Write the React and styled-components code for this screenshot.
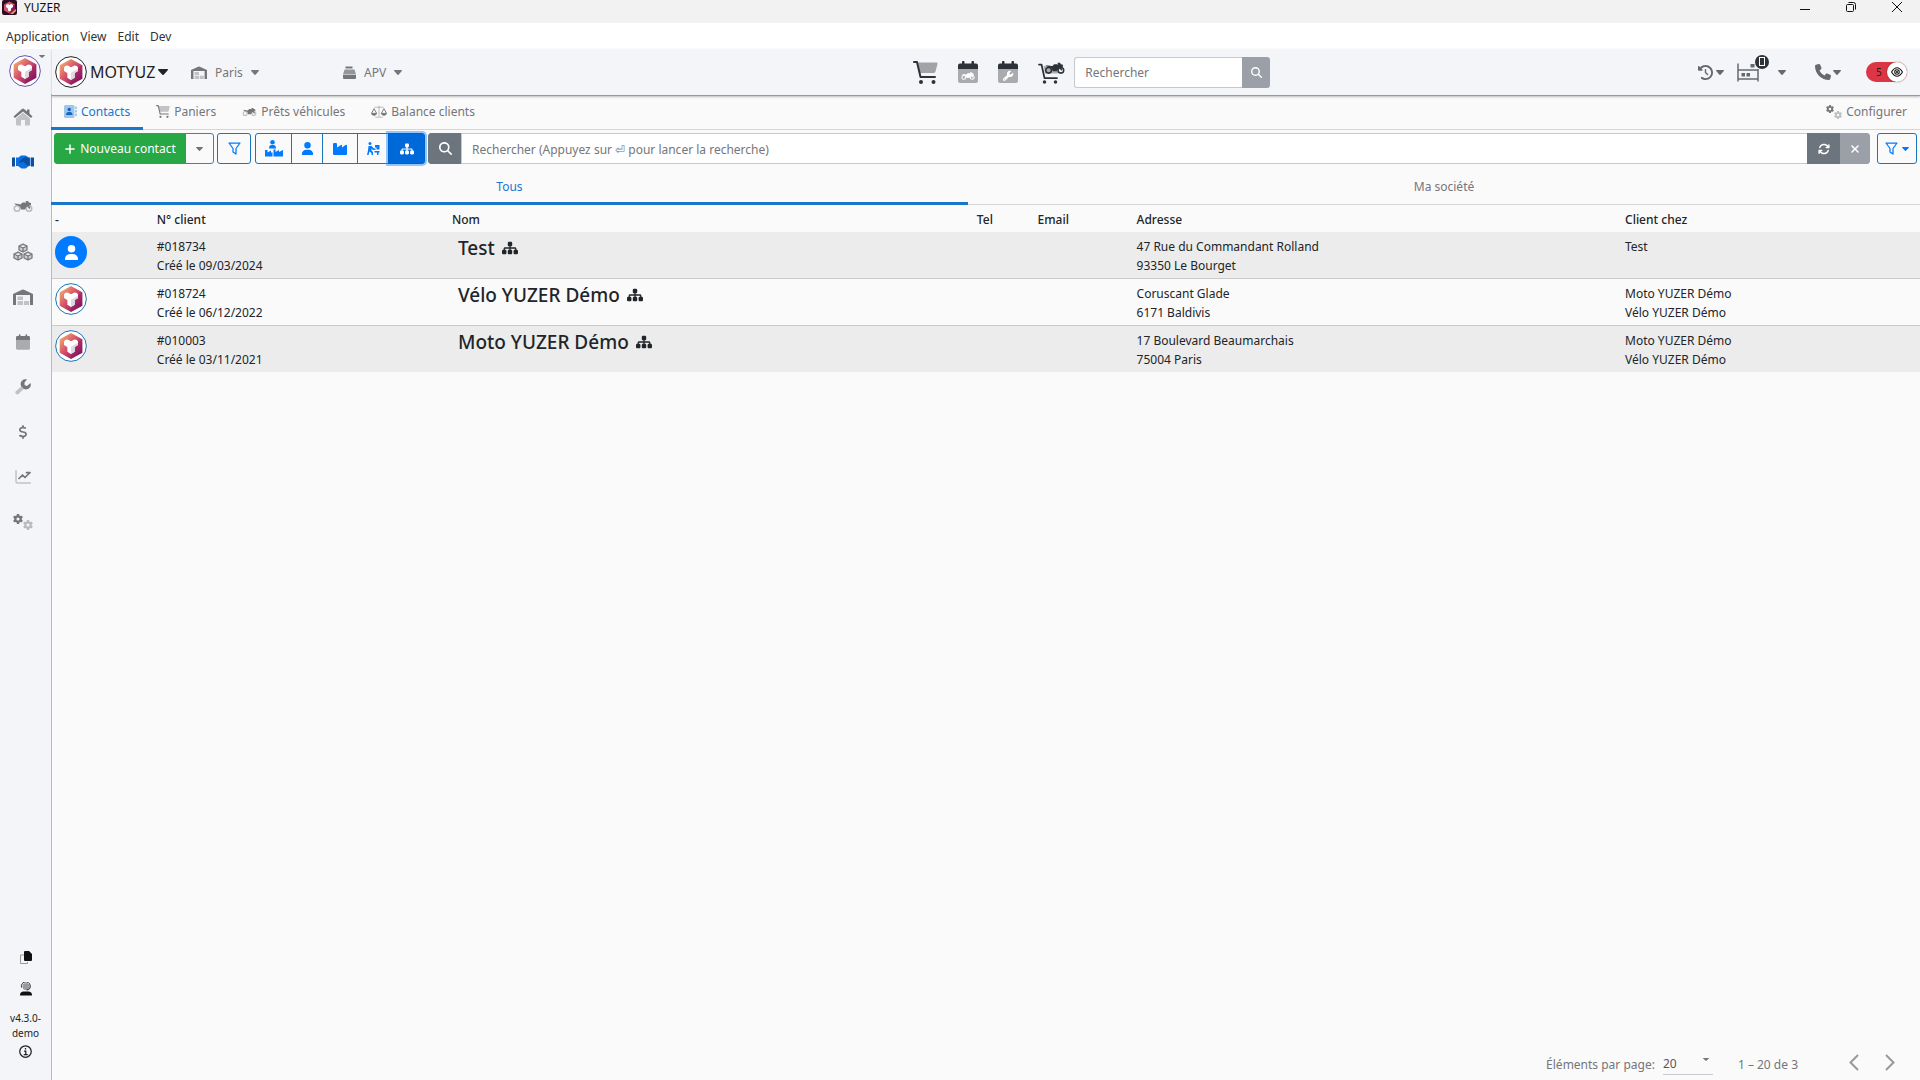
import React from "react";
import styled, { createGlobalStyle, css } from "styled-components";
import {
  FaUser, FaSitemap, FaMagnifyingGlass, FaArrowsRotate, FaXmark,
  FaClockRotateLeft, FaPhone, FaDollarSign, FaPlus, FaGear, FaWrench,
} from "react-icons/fa6";

const Global = createGlobalStyle`
  *, *::before, *::after { box-sizing: border-box; }
  html, body, #root { height: 100%; margin: 0; }
  body {
    background: #fafafa;
    color: #212529;
    font-family: "Noto Sans", "Open Sans", "Liberation Sans", sans-serif;
    font-size: 12px;
    line-height: 19px;
  }
  button, input, select { font: inherit; color: inherit; margin: 0; }
  button { padding: 0; border: 0; background: none; cursor: pointer; }
  a { color: inherit; text-decoration: none; }
  svg { display: block; flex: none; }
`;

/* ---------- icons ---------- */

const Caret = ({ w = 8, h = 5 }) => (
  <svg width={w} height={h} viewBox="0 0 8 5" preserveAspectRatio="none" fill="currentColor">
    <path d="M.6 0h6.8c.5 0 .8.6.4 1L4.5 4.7a.7.7 0 0 1-1 0L.2 1C-.2.6.1 0 .6 0z" />
  </svg>
);

const Logo = ({ size = 32, ring = "#222" }) => (
  <svg width={size} height={size} viewBox="0 0 96 96">
    <defs>
      <linearGradient id="hexFill" x1="0.1" y1="0.1" x2="0.9" y2="0.9">
        <stop offset="0" stopColor="#f0a96e" />
        <stop offset="0.45" stopColor="#d6506a" />
        <stop offset="1" stopColor="#7c1360" />
      </linearGradient>
    </defs>
    <circle cx="48" cy="48" r="46" fill="#fff" stroke={ring} strokeWidth="3" />
    <path d="M48 9 82 28V68L48 87 14 68V28Z" fill="url(#hexFill)" />
    <path d="M48 48 82 28V68L48 87Z" fill="#8a1260" opacity="0.3" />
    <path d="M27 35c2-5 7-8 12-6l9 5 9-5c5-2 10 1 12 6v10l-10 6v14l-11 7-11-7V51l-10-6z" fill="#fff" />
    <path d="M48 50 69 38v7l-10 6v14l-11 7z" fill="#dcd9e0" />
  </svg>
);

const AppIcon = () => (
  <svg width="15" height="15" viewBox="0 0 30 30">
    <rect width="30" height="30" rx="4" fill="#2b0f22" />
    <path d="M15 3 26 9V21L15 27 4 21V9Z" fill="#d8506a" />
    <path d="M15 15 26 9V21L15 27Z" fill="#8a1a5c" />
    <path d="M8 10l4-2 3 2 3-2 4 2v4l-4 3v4l-3 2-3-2v-4l-4-3z" fill="#fff" />
    <path d="M16 28 28 18v4l-6 6z" fill="#e89a5c" />
  </svg>
);

const Home = () => (
  <svg width="20" height="18" viewBox="0 0 40 36" fill="currentColor">
    <path d="M20 9 34 21v12a2 2 0 0 1-2 2h-8V24h-8v11H8a2 2 0 0 1-2-2V21z" opacity="0.4" />
    <path d="M18 2a3 3 0 0 1 4 0l6 5V3h5v8l6 6-3 3L20 7 4 20l-3-3z" />
  </svg>
);

const Handshake = () => (
  <svg width="22" height="14" viewBox="0 0 44 28">
    <path d="M0 5h6v18H0zM38 5h6v18h-6z" fill="#0b4f9e" />
    <path d="M8 5h5l5-4h9l7 4h3v17h-3l-7 5h-8l-7-5H8z" fill="#0a6fe0" />
    <path d="M19 9l7-5 9 3v13l-4 1-9-8-5 3-3-3z" fill="#0b4f9e" />
  </svg>
);

const Moto = ({ wheels = 0.45, ...rest }) => (
  <svg viewBox="0 0 40 22" fill="currentColor" {...rest}>
    <g fill="none" stroke="currentColor" strokeWidth="3" opacity={wheels}>
      <circle cx="8" cy="15" r="5.500" />
      <circle cx="32" cy="15" r="5.500" />
    </g>
    <path d="M2 5l9 1 4 1 4-4h6l2 1-2-4h5l2 3 4 1v4l-4 1 3 5-2 2-5-6-4 7H16l-2-6-4-2-4-1z" />
  </svg>
);

const Boxes = () => (
  <svg width="20" height="18" viewBox="0 0 40 36" fill="currentColor" fillOpacity="0.3" stroke="currentColor" strokeWidth="2.600" strokeLinejoin="round">
    <path d="M20 2l8 4v8l-8 4-8-4V6zM12 6l8 4 8-4M20 10v8" />
    <path d="M10 18l8 4v8l-8 4-8-4v-8zM2 22l8 4 8-4M10 26v8" />
    <path d="M30 18l8 4v8l-8 4-8-4v-8zM22 22l8 4 8-4M30 26v8" />
  </svg>
);

const Warehouse = ({ w = 20, h = 16 }) => (
  <svg width={w} height={h} viewBox="0 0 40 32" fill="currentColor">
    <path d="M0 10 18 1.500a5 5 0 0 1 4 0L40 10v22h-6V12H6v20H0z" />
    <path d="M9 15h11v7H9zM9 24h11v8H9zM22 24h10v8H22z" opacity="0.4" />
  </svg>
);

const CalendarBase = ({ w, h, children }) => (
  <svg width={w} height={h} viewBox="0 0 40 44" fill="currentColor">
    <path d="M0 15h40v25a4 4 0 0 1-4 4H4a4 4 0 0 1-4-4z" fill="#6b6e73" opacity="0.55" />
    <path d="M4 5h4V2a2 2 0 0 1 5 0v3h14V2a2 2 0 0 1 5 0v3h4a4 4 0 0 1 4 4v7H0V9a4 4 0 0 1 4-4z" />
    {children}
  </svg>
);

const WrenchDuo = () => (
  <svg width="16" height="16" viewBox="0 0 32 32" fill="currentColor">
    <path d="M16 12l5 5L7 30c-4 3-9-2-5-6z" opacity="0.4" />
    <path d="M31 8c3 9-6 15-13 12l-6-6C9 6 16-1 24 1l-5 6v5l5 2z" />
  </svg>
);

const Chart = () => (
  <svg width="16" height="14" viewBox="0 0 32 28" fill="none" stroke="currentColor" strokeLinecap="round" strokeLinejoin="round">
    <path d="M2 1v22q0 3 3 3h26" strokeWidth="3" opacity="0.4" />
    <path d="M8 17l7-7 5 5 9-9M23 5h7" strokeWidth="3.500" />
  </svg>
);

const GearsWrap = styled.span`
  display: flex;
  flex: none;
  align-items: flex-start;
  svg + svg { opacity: 0.45; margin-top: 6px; }
`;
const Gears = ({ size = 10 }) => (
  <GearsWrap><FaGear size={size} /><FaGear size={size} /></GearsWrap>
);

const Copy = () => (
  <svg width="12" height="13" viewBox="0 0 24 26">
    <path d="M8 8H1v17h14v-3" fill="none" stroke="#999" strokeWidth="2" />
    <path d="M10 0h8l6 6v12a2 2 0 0 1-2 2H10a2 2 0 0 1-2-2V2a2 2 0 0 1 2-2z" fill="#111" />
  </svg>
);

const Support = () => (
  <svg width="12" height="14" viewBox="0 0 24 28">
    <circle cx="12" cy="9" r="7" fill="#999" />
    <path d="M3 11a9 9 0 1 1 17 1q-1 4-7 4" fill="none" stroke="#333" strokeWidth="2" />
    <path d="M0 27c0-6 3-8 7-8h10c4 0 7 2 7 8z" fill="#111" />
  </svg>
);

const Info = () => (
  <svg width="13" height="13" viewBox="0 0 26 26" fill="none" stroke="#222" strokeWidth="2.500">
    <circle cx="13" cy="13" r="11.500" />
    <path d="M10 12h3.500v7M9.500 19h8M13 6v3" />
  </svg>
);

const Cart = ({ w, h }) => (
  <svg width={w} height={h} viewBox="0 0 50 46" fill="none">
    <path d="M10 3h37q3 0 2 3l-4 15q-1 3-4 3H14z" fill="currentColor" opacity="0.42" />
    <path d="M2 2h6l7 30h29" stroke="currentColor" strokeWidth="4" strokeLinecap="round" strokeLinejoin="round" />
    <circle cx="16" cy="42" r="4" fill="currentColor" />
    <circle cx="41" cy="42" r="4" fill="currentColor" />
  </svg>
);

const MotoCart = () => (
  <svg width="27" height="24" viewBox="0 0 54 48" fill="none">
    <path d="M11 12h32l-3 15H14z" fill="currentColor" opacity="0.35" />
    <path d="M2 9h5l6 27h25" stroke="currentColor" strokeWidth="3.500" strokeLinecap="round" strokeLinejoin="round" />
    <circle cx="13" cy="44" r="3.500" fill="currentColor" />
    <circle cx="35" cy="44" r="3.500" fill="currentColor" />
    <Moto x="13" y="5" width="41" height="23" wheels={1} />
  </svg>
);

const AddressBook = () => (
  <svg width="13" height="13" viewBox="0 0 26 26">
    <rect width="21" height="26" rx="3" fill="#1976d2" opacity="0.4" />
    <path d="M23 3h2v5h-2zM23 10h2v5h-2zM23 17h2v5h-2z" fill="#1976d2" opacity="0.7" />
    <circle cx="10.500" cy="9" r="3.500" fill="#1565c0" />
    <path d="M4 20c0-4 2-6 5-6h3c3 0 5 2 5 6z" fill="#1565c0" />
  </svg>
);

const Scales = () => (
  <svg width="16" height="13" viewBox="0 0 34 26" fill="none" stroke="currentColor" strokeWidth="2">
    <path d="M17 1v23M9 25h16M7 4h20" opacity="0.5" />
    <path d="M1 17 6.500 7 12 17M22 17l5.500-10L33 17" />
    <path d="M1 17h11q-1 4-5.500 4T1 17zM22 17h11q-1 4-5.500 4T22 17z" fill="currentColor" />
  </svg>
);

const Register = () => (
  <svg width="13" height="13" viewBox="0 0 26 26" fill="currentColor">
    <path d="M5 1h14v4H5z" />
    <path d="M3 7h20l3 10H0z" opacity="0.75" />
    <path d="M0 18h26v6a2 2 0 0 1-2 2H2a2 2 0 0 1-2-2z" />
  </svg>
);

const Funnel = () => (
  <svg width="13" height="13" viewBox="0 0 26 26" fill="none" stroke="currentColor" strokeWidth="2.500" strokeLinejoin="round">
    <path d="M2 2h22l-8 11v11l-6-4v-7z" />
  </svg>
);

const UserIndustry = () => (
  <svg width="18" height="17" viewBox="0 0 36 34" fill="currentColor">
    <circle cx="15" cy="4.500" r="4.500" />
    <path d="M8 17c0-5 2-7 5-7h4c3 0 5 2 5 7z" />
    <path d="M0 20h5v5l7-4v4h3v8H0zM17 19h4v5l7-4v4l8-4v13H17z" />
  </svg>
);

const Industry = () => (
  <svg width="14" height="12" viewBox="0 0 28 24" fill="currentColor">
    <path d="M0 2a2 2 0 0 1 2-2h4a2 2 0 0 1 2 2v7l8-5q2-1 2 1v4l7-5q3-1 3 1v17a2 2 0 0 1-2 2H2a2 2 0 0 1-2-2z" />
  </svg>
);

const Carrier = () => (
  <svg width="13" height="13" viewBox="0 0 26 26" fill="currentColor">
    <circle cx="6" cy="3" r="3" />
    <path d="M3 8h6l5 5h3v3h-5l-3-3v4l3 3v6H9v-4l-4-3-2 7H0l2-9z" />
    <path d="M16 6h9v9h-6v-4h-3zM15 18h10v3h-2v5h-3v-5h-5z" />
  </svg>
);

const Bed = () => (
  <svg width="22" height="19" viewBox="0 0 44 38" fill="none" stroke="currentColor" strokeWidth="3">
    <path d="M2 1v36M42 12v25M2 14h40M2 32h40" />
    <path d="M9 20h7v7H9zM19 20h7v7h-7zM27 2h8v7h-8z" fill="currentColor" stroke="none" />
  </svg>
);

const Eye = () => (
  <svg width="12" height="10" viewBox="0 0 24 20" fill="none" stroke="#111" strokeWidth="2.200">
    <path d="M1 10Q12-7 23 10 12 27 1 10z" />
    <circle cx="12" cy="10" r="4.500" />
    <circle cx="12" cy="10" r="1" />
  </svg>
);

const Chevron = ({ right }) => (
  <svg width="10" height="17" viewBox="0 0 20 34" fill="none" stroke="currentColor" strokeWidth="4">
    <path d={right ? "M2 2 17 17 2 32" : "M18 2 3 17 18 32"} />
  </svg>
);

/* ---------- window frame ---------- */

const Window = styled.div`
  display: flex;
  flex-direction: column;
  min-height: 100vh;
`;

const TitleBar = styled.div`
  display: flex;
  align-items: flex-start;
  justify-content: space-between;
  height: 23px;
  background: #f2f2f2;
  color: #111;
`;

const AppTitle = styled.div`
  display: flex;
  gap: 7px;
  padding-left: 2px;
  line-height: 15px;
`;

const WindowButtons = styled.div`
  display: flex;
  button { width: 46px; height: 14px; display: grid; place-items: center; }
`;

const MenuBar = styled.nav`
  display: flex;
  align-items: center;
  gap: 11px;
  height: 26px;
  padding-left: 6px;
  background: #fff;
  color: #333;
`;

const Body = styled.div`
  display: flex;
  flex: 1;
`;

/* ---------- sidebar ---------- */

const Side = styled.aside`
  display: flex;
  flex-direction: column;
  width: 52px;
  flex: none;
  background: #f4f5f8;
  color: #74767a;
`;

const SideLogo = styled.button`
  display: flex;
  align-items: flex-start;
  height: 45px;
  padding: 6px 0 0 9px;
  svg + svg { margin-left: -2px; }
`;

const SideBody = styled.div`
  display: flex;
  flex-direction: column;
  flex: 1;
  border-right: 1px solid #b9bbbe;
`;

const SideLink = styled.a`
  display: grid;
  place-items: center;
  width: 46px;
  height: 45px;
`;

const SideFooter = styled.div`
  display: flex;
  flex-direction: column;
  align-items: center;
  margin-top: auto;
  padding-bottom: 18px;
  color: #222;
  font-size: 10px;
  line-height: 15px;
  text-align: center;
  a { display: grid; place-items: center; height: 32px; }
  span { padding-top: 6px; }
  a:last-child { height: 21px; }
`;

/* ---------- header ---------- */

const Main = styled.main`
  display: flex;
  flex-direction: column;
  flex: 1;
  min-width: 0;
`;

const Header = styled.header`
  display: grid;
  grid-template-columns: 46% auto 1fr;
  align-items: center;
  height: 47px;
  background: #f4f5f8;
  border-bottom: 1px solid #97999d;
  box-shadow: 0 1px 2px rgba(0, 0, 0, 0.25);
`;

const HeaderGroup = styled.div`
  display: flex;
  align-items: center;
`;

const Company = styled.button`
  display: flex;
  align-items: center;
  gap: 3px;
  width: 139px;
  padding-left: 3px;
  font-size: 16px;
  color: #222;
`;

const Picker = styled.button`
  display: flex;
  align-items: center;
  gap: 8px;
  width: ${(p) => p.$width}px;
  color: #74767a;
`;

const Shortcuts = styled.div`
  display: flex;
  align-items: center;
  gap: 20px;
  padding: 0 9px 0 2px;
  color: #2d3238;
`;

const QuickSearch = styled.form`
  display: flex;
  height: 31px;
  input {
    width: 168px;
    padding: 0 10px;
    border: 1px solid #c6c9cd;
    border-right: 0;
    border-radius: 3px 0 0 3px;
    background: #fff;
  }
  input::placeholder { color: #74767a; opacity: 1; }
  button {
    display: grid;
    place-items: center;
    width: 28px;
    border-radius: 0 3px 3px 0;
    background: #9a9fa8;
    color: #fff;
  }
`;

const HeaderTools = styled(HeaderGroup)`
  justify-content: flex-end;
  gap: 25px;
  padding-right: 13px;
  color: #65696e;
`;

const Tool = styled.button`
  position: relative;
  display: flex;
  align-items: center;
  gap: ${(p) => p.$gap || 2}px;
  margin-left: ${(p) => p.$lead || 0}px;
`;

const Badge = styled.span`
  position: absolute;
  left: 18px;
  top: -8px;
  display: grid;
  place-items: center;
  width: 14px;
  height: 14px;
  border-radius: 50%;
  background: #2d3238;
  &::after { content: ""; width: 6px; height: 9px; border: 1px solid #fff; }
`;

const Toggle = styled.label`
  position: relative;
  display: flex;
  align-items: center;
  width: 41px;
  height: 20px;
  border-radius: 10px;
  background: #dc3545;
  color: #222;
  font-size: 10px;
  input { position: absolute; inset: 0; width: 100%; height: 100%; opacity: 0; }
  > span { width: 21px; padding-left: 10px; }
`;

const Thumb = styled.i`
  display: grid;
  place-items: center;
  width: 20px;
  height: 20px;
  border-radius: 50%;
  background: #fff;
  box-shadow: 0 0 2px rgba(0, 0, 0, 0.4);
`;

/* ---------- tabs and toolbar ---------- */

const Tabs = styled.nav`
  display: flex;
  height: 34px;
  border-bottom: 1px solid #d4d6d9;
  margin-left: -1px;
`;

const Tab = styled.a`
  display: flex;
  align-items: center;
  gap: 4px;
  height: 34px;
  padding: 0 13px;
  color: #74767a;
  border-bottom: 3px solid transparent;
  ${(p) => p.$active && css`color: #1976d2; border-color: #1976c8;`}
  ${(p) => p.$end && css`margin-left: auto;`}
`;

const Toolbar = styled.div`
  display: flex;
  gap: 3px;
  padding: 3px 3px 0 2px;
  height: 35px;
`;

const Btn = styled.button`
  display: inline-flex;
  align-items: center;
  justify-content: center;
  gap: 4px;
  width: ${(p) => (p.$width ? `${p.$width}px` : "auto")};
  height: 31px;
  border: 1px solid ${(p) => p.$line || "#1976b8"};
  border-radius: 3px;
  color: ${(p) => p.$ink || "#007bff"};
  background: ${(p) => p.$fill || "transparent"};
`;

const Group = styled.div`
  display: flex;
  flex: ${(p) => (p.$grow ? 1 : "none")};
  margin-left: ${(p) => p.$lead || 0}px;
  margin-right: ${(p) => p.$trail || 0}px;
  > * { border-radius: 0; }
  > * + * { margin-left: -1px; }
  > :first-child { border-radius: 3px 0 0 3px; }
  > :last-child { border-radius: 0 3px 3px 0; }
  > [aria-pressed="true"] { box-shadow: 0 0 0 2px rgba(38, 143, 255, 0.5); }
`;

const SearchInput = styled.input`
  flex: 1;
  min-width: 0;
  height: 31px;
  padding: 1px 10px 0;
  border: 1px solid #c6c9cd;
  background: #fff;
  &::placeholder { color: #74767a; opacity: 1; }
`;

const Scope = styled.nav`
  display: flex;
  height: 40px;
  border-bottom: 1px solid #d4d6d9;
  margin-left: -1px;
`;

const ScopeTab = styled.a`
  flex: ${(p) => p.$grow};
  height: 40px;
  line-height: 43px;
  text-align: center;
  color: #74767a;
  border-bottom: 3px solid transparent;
  ${(p) => p.$active && css`color: #1976d2; border-color: #1976c8;`}
`;

/* ---------- table ---------- */

const Table = styled.table`
  width: 100%;
  table-layout: fixed;
  border-collapse: collapse;
  th {
    height: 27px;
    padding: 2px 3px 0;
    text-align: left;
    font-weight: 500;
  }
  td { height: 46px; padding: 4px 3px 3px; vertical-align: top; }
  tbody tr:nth-child(odd) { background: #ececec; }
  tbody tr + tr td { border-top: 1px solid #c9cbce; }
`;

const Lines = styled.div`
  padding-top: 1px;
  white-space: pre-line;
`;

const Name = styled.div`
  display: flex;
  align-items: center;
  gap: 7px;
  padding-left: 6px;
  font-size: 19px;
  line-height: 24px;
  font-weight: 500;
`;

const Avatar = styled.div`
  display: grid;
  place-items: center;
  width: 32px;
  height: 32px;
  border-radius: 50%;
  background: #007bff;
  color: #fff;
`;

const Pager = styled.footer`
  display: flex;
  align-items: center;
  justify-content: flex-end;
  margin-top: auto;
  padding: 0 12px 4px 0;
  color: #74767a;
`;

const PageSize = styled.span`
  display: flex;
  align-items: center;
  width: 50px;
  height: 22px;
  margin: 0 25px 0 8px;
  padding-right: 4px;
  border-bottom: 1px solid #c6c9cd;
  select {
    flex: 1;
    min-width: 0;
    padding: 0;
    border: 0;
    background: none;
    appearance: none;
    color: #55585c;
  }
  svg { margin-bottom: 8px; }
`;

const PageBtn = styled.button`
  display: grid;
  place-items: center;
  width: 36px;
  height: 24px;
  padding-bottom: 4px;
  color: #97999d;
`;

const RangeText = styled.span`
  margin-right: 38px;
`;

const sideItems = [
  ["Accueil", <Home />],
  ["Contacts", <Handshake />],
  ["Véhicules", <Moto width="20" height="11" />],
  ["Stock", <Boxes />],
  ["Magasin", <Warehouse />],
  ["Agenda", <CalendarBase w={14} h={16} />],
  ["Atelier", <WrenchDuo />],
  ["Finances", <FaDollarSign size={14} />],
  ["Statistiques", <Chart />],
  ["Paramètres", <Gears />],
];

const clients = [
  { id: "#018734", date: "09/03/2024", name: "Test", address: "47 Rue du Commandant Rolland\n93350 Le Bourget", at: "Test", person: true },
  { id: "#018724", date: "06/12/2022", name: "Vélo YUZER Démo", address: "Coruscant Glade\n6171 Baldivis", at: "Moto YUZER Démo\nVélo YUZER Démo" },
  { id: "#010003", date: "03/11/2021", name: "Moto YUZER Démo", address: "17 Boulevard Beaumarchais\n75004 Paris", at: "Moto YUZER Démo\nVélo YUZER Démo" },
];

const columns = [
  ["-", "5.45%"],
  ["N° client", "15.8%"],
  ["Nom", "28.1%"],
  ["Tel", "3.25%"],
  ["Email", "5.3%"],
  ["Adresse", "26.15%"],
  ["Client chez", "15.95%"],
];

export default function App() {
  return (
    <Window>
      <Global />
      <TitleBar>
        <AppTitle><AppIcon />YUZER</AppTitle>
        <WindowButtons>
          <button aria-label="Réduire"><svg width="10" height="10" stroke="#111"><path d="M0 7.500h10" /></svg></button>
          <button aria-label="Restaurer">
            <svg width="10" height="10" fill="none" stroke="#111"><rect x="0.500" y="2.500" width="7" height="7" rx="1" /><path d="M2.500.5h5q2 0 2 2v5" /></svg>
          </button>
          <button aria-label="Fermer"><svg width="10" height="10" stroke="#111"><path d="M0 0 10 10M10 0 0 10" /></svg></button>
        </WindowButtons>
      </TitleBar>
      <MenuBar>
        <a href="#application">Application</a>
        <a href="#view">View</a>
        <a href="#edit">Edit</a>
        <a href="#dev">Dev</a>
      </MenuBar>
      <Body>
        <Side>
          <SideLogo aria-label="Compte"><Logo ring="#6a4fb0" /><Caret w={6} h={3} /></SideLogo>
          <SideBody>
            {sideItems.map(([label, icon]) => (
              <SideLink key={label} href={`#${label}`} aria-label={label}>{icon}</SideLink>
            ))}
            <SideFooter>
              <a href="#copier" aria-label="Copier"><Copy /></a>
              <a href="#support" aria-label="Support"><Support /></a>
              <span>v4.3.0-<br />demo</span>
              <a href="#infos" aria-label="Informations"><Info /></a>
            </SideFooter>
          </SideBody>
        </Side>
        <Main>
          <Header>
            <HeaderGroup>
              <Company><Logo /><span>MOTYUZ</span><Caret w={10} h={6} /></Company>
              <Picker $width={152}><Warehouse w={16} h={13} />Paris<Caret /></Picker>
              <Picker $width={70}><Register />APV<Caret /></Picker>
            </HeaderGroup>
            <HeaderGroup>
              <Shortcuts>
                <button aria-label="Panier"><Cart w={25} h={23} /></button>
                <button aria-label="Réservations">
                  <CalendarBase w={20} h={22}><Moto x="6" y="22" width="28" height="16" color="#fff" wheels={1} /></CalendarBase>
                </button>
                <button aria-label="Rendez-vous atelier">
                  <CalendarBase w={20} h={22}><FaWrench x="10" y="19" size={21} color="#fff" /></CalendarBase>
                </button>
                <button aria-label="Vente véhicule"><MotoCart /></button>
              </Shortcuts>
              <QuickSearch>
                <input type="search" placeholder="Rechercher" aria-label="Rechercher" />
                <button type="button" aria-label="Lancer la recherche"><FaMagnifyingGlass size={11} /></button>
              </QuickSearch>
            </HeaderGroup>
            <HeaderTools>
              <Tool aria-label="Historique" $gap={3}><FaClockRotateLeft size={15} /><Caret /></Tool>
              <Tool aria-label="Atelier" $gap={19} $lead={-12}><Bed /><Badge /><Caret /></Tool>
              <Tool aria-label="Appels" $lead={4}><FaPhone size={16} /><Caret /></Tool>
              <Toggle>
                <input type="checkbox" aria-label="Affichage" defaultChecked />
                <span>5</span>
                <Thumb><Eye /></Thumb>
              </Toggle>
            </HeaderTools>
          </Header>
          <Tabs>
            <Tab href="#contacts" $active><AddressBook />Contacts</Tab>
            <Tab href="#paniers"><Cart w={14} h={13} />Paniers</Tab>
            <Tab href="#prets"><Moto width="15" height="8" />Prêts véhicules</Tab>
            <Tab href="#balance"><Scales />Balance clients</Tab>
            <Tab href="#configurer" $end><Gears size={8} />Configurer</Tab>
          </Tabs>
          <Toolbar>
            <Group>
              <Btn $width={132} $fill="#28a745" $line="#28a745" $ink="#fff"><FaPlus size={12} />Nouveau contact</Btn>
              <Btn $width={29} $line="#6c757d" $ink="#6c757d" aria-label="Plus d'options"><Caret w={7} h={4} /></Btn>
            </Group>
            <Btn $width={34} aria-label="Filtrer"><Funnel /></Btn>
            <Group $lead={1}>
              <Btn $width={37} aria-label="Tous types"><UserIndustry /></Btn>
              <Btn $width={32} aria-label="Particuliers"><FaUser size={13} /></Btn>
              <Btn $width={36} aria-label="Sociétés"><Industry /></Btn>
              <Btn $width={32} aria-label="Fournisseurs"><Carrier /></Btn>
              <Btn $width={37} aria-label="Groupes" aria-pressed="true" $fill="#0069d9" $line="#0062cc" $ink="#fff"><FaSitemap size={14} /></Btn>
            </Group>
            <Group $grow $trail={4}>
              <Btn $width={34} $fill="#6c757d" $line="#6c757d" $ink="#fff" aria-label="Rechercher"><FaMagnifyingGlass size={13} /></Btn>
              <SearchInput aria-label="Rechercher un contact" placeholder="Rechercher (Appuyez sur ⏎ pour lancer la recherche)" />
              <Btn $width={34} $fill="#6c757d" $line="#6c757d" $ink="#fff" aria-label="Actualiser"><FaArrowsRotate size={12} /></Btn>
              <Btn $width={30} $fill="#9a9fa8" $line="#9a9fa8" $ink="#fff" aria-label="Effacer"><FaXmark size={12} /></Btn>
            </Group>
            <Btn $width={40} aria-label="Filtres enregistrés"><Funnel /><Caret w={7} h={4} /></Btn>
          </Toolbar>
          <Scope>
            <ScopeTab href="#tous" $active $grow={917}>Tous</ScopeTab>
            <ScopeTab href="#societe" $grow={952}>Ma société</ScopeTab>
          </Scope>
          <Table>
            <colgroup>{columns.map(([label, width]) => <col key={label} width={width} />)}</colgroup>
            <thead>
              <tr>{columns.map(([label]) => <th key={label} scope="col">{label}</th>)}</tr>
            </thead>
            <tbody>
              {clients.map((c) => (
                <tr key={c.id}>
                  <td>{c.person ? <Avatar><FaUser size={15} /></Avatar> : <Logo ring="#1976b8" />}</td>
                  <td><Lines>{`${c.id}\nCréé le ${c.date}`}</Lines></td>
                  <td><Name>{c.name}<FaSitemap size={16} /></Name></td>
                  <td />
                  <td />
                  <td><Lines>{c.address}</Lines></td>
                  <td><Lines>{c.at}</Lines></td>
                </tr>
              ))}
            </tbody>
          </Table>
          <Pager>
            <label htmlFor="page-size">Éléments par page:</label>
            <PageSize>
              <select id="page-size" defaultValue="20"><option>20</option><option>50</option></select>
              <Caret w={6} h={3} />
            </PageSize>
            <RangeText>1 – 20 de 3</RangeText>
            <PageBtn aria-label="Page précédente"><Chevron /></PageBtn>
            <PageBtn aria-label="Page suivante"><Chevron right /></PageBtn>
          </Pager>
        </Main>
      </Body>
    </Window>
  );
}
